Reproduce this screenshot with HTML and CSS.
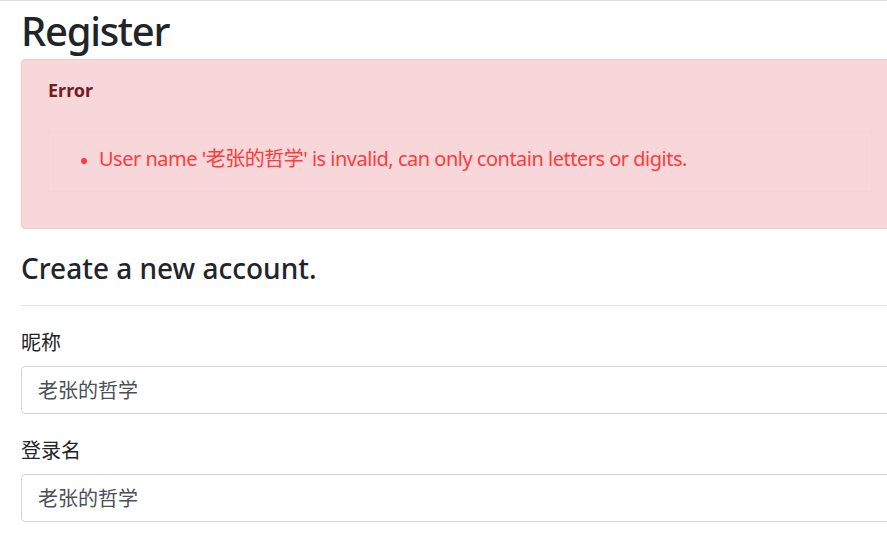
FILE: index.html
```html
<!DOCTYPE html>
<html lang="zh-CN">
<head>
<meta charset="utf-8">
<title>Register</title>
<link rel="stylesheet" href="styles.css">
</head>
<body>
<div class="topbar"></div>
<div class="container">
  <h1 class="page-title">Register</h1>

  <div class="alert-danger">
    <h4 class="alert-heading">Error</h4>
    <div class="validation-summary">
      <ul>
        <li>User name '老张的哲学' is invalid, can only contain letters or digits.</li>
      </ul>
    </div>
  </div>

  <h3 class="form-title">Create a new account.</h3>
  <hr class="divider">

  <div class="form-group">
    <label class="form-label">昵称</label>
    <input class="form-control" type="text" value="老张的哲学">
  </div>
  <div class="form-group">
    <label class="form-label">登录名</label>
    <input class="form-control" type="text" value="老张的哲学">
  </div>
</div>
</body>
</html>
```

FILE: styles.css
```css
html, body {
  margin: 0;
  padding: 0;
}
body {
  font-family: "Noto Sans", "Noto Sans CJK SC", sans-serif;
  font-size: 16px;
  line-height: 1.5;
  color: #212529;
  background: #fff;
  overflow: hidden;
}
.topbar {
  height: 0;
  border-top: 1px solid #dcdde0;
}
.container {
  width: 878px;
  padding-left: 21px;
}
.page-title {
  margin: 0 0 4px 0;
  padding-top: 6px;
  font-size: 40px;
  font-weight: 500;
  line-height: 1.2;
  letter-spacing: -1.3px;
}
.alert-danger {
  background: #f8d7da;
  border: 1px solid #f5c6cb;
  border-radius: 4px;
  padding: 17px 26px 36px 26px;
  color: #721c24;
}
.alert-heading {
  margin: 0 0 27px 0;
  font-size: 18px;
  font-weight: 700;
  line-height: 1.5;
}
.validation-summary {
  border: 1px solid #f9d1d6;
  padding: 12px 10px 17px 10px;
  color: #ff3b3b;
  font-size: 20px;
  line-height: 30px;
  letter-spacing: -0.5px;
}
.validation-summary ul {
  margin: 0;
  padding-left: 40px;
}
.validation-summary li::marker {
  font-size: 16px;
}
.form-title {
  margin: 23px 0 0 0;
  font-size: 28px;
  font-weight: 500;
  line-height: 1.2;
}
.divider {
  margin: 19px 0 22px 0;
  border: 0;
  border-top: 1px solid #e3e3e3;
}
.form-group {
  margin-bottom: 22px;
}
.form-label {
  display: block;
  margin-bottom: 8px;
  font-size: 20px;
  line-height: 1.5;
}
.form-control {
  display: block;
  box-sizing: border-box;
  width: 100%;
  height: 48px;
  padding: 8px 16px;
  font-family: inherit;
  font-size: 20px;
  color: #495057;
  background: #fff;
  border: 1px solid #ced4da;
  border-radius: 4px;
}
```
